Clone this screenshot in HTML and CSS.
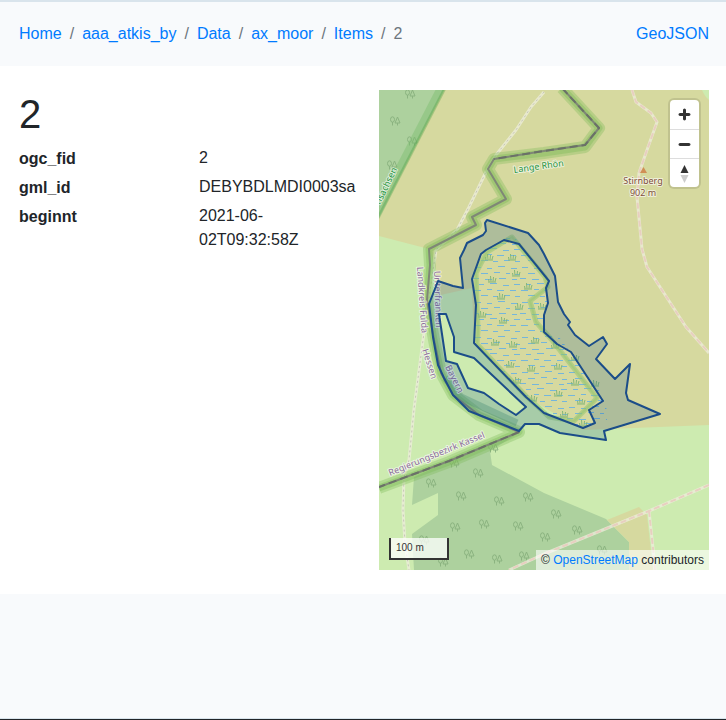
FILE: index.html
```html
<!DOCTYPE html>
<html lang="en">
<head>
<meta charset="utf-8">
<meta name="viewport" content="width=device-width, initial-scale=1">
<title>2</title>
<link rel="stylesheet" href="styles.css">
</head>
<body>
<header class="topbar">
  <div class="container topbar-inner">
    <nav aria-label="Breadcrumb">
      <ol class="breadcrumb">
        <li><a href="#">Home</a></li>
        <li><a href="#">aaa_atkis_by</a></li>
        <li><a href="#">Data</a></li>
        <li><a href="#">ax_moor</a></li>
        <li><a href="#">Items</a></li>
        <li class="current">2</li>
      </ol>
    </nav>
    <a href="#">GeoJSON</a>
  </div>
</header>

<main class="container content">
  <section>
    <h1>2</h1>
    <dl class="properties">
      <dt>ogc_fid</dt><dd>2</dd>
      <dt>gml_id</dt><dd>DEBYBDLMDI0003sa</dd>
      <dt>beginnt</dt><dd>2021-06-02T09:32:58Z</dd>
    </dl>
  </section>

  <section class="map" aria-label="Map">
    <svg class="map-canvas" viewBox="0 0 330 480" preserveAspectRatio="xMidYMid slice">
      <defs>
        <g id="trees" fill="none" stroke="#8bb380" stroke-width="1">
          <ellipse cx="-2.5" cy="-1.5" rx="2" ry="2.7"/>
          <path d="M-2.5 1V4.500M2.500 -4L0 2H5ZM2.500 2V4.500"/>
        </g>
        <path id="tuft" d="M-4 3H4M-3 2.500L-3.500 0M-1 2.500L-1.500 -3M1 2.500L1.500 -2M3 2.500L4 -1" fill="none" stroke="#84b778" stroke-width="1"/>
        <pattern id="marsh" width="47" height="35" patternUnits="userSpaceOnUse">
          <path transform="translate(0 .5)" d="M2 2h6M14 3h5M25 1h7M38 3h6M8 8h7M21 7h6M33 8h4M42 9h5M0 13h6M12 14h7M26 13h7M39 14h5M6 19h5M17 18h7M30 20h6M41 19h6M1 25h7M14 24h5M24 25h7M37 25h6M8 30h7M20 31h5M31 30h6M42 31h5" stroke="#74b6dc" stroke-width="1"/>
        </pattern>
        <clipPath id="bog"><path d="M133 144L165 184 170 191 167 198 169 213 165 225 165 242 180 247 227 310 228 330 204 338 165 323 147 307 95 253 97 215 93 189 102 164Z"/></clipPath>
      </defs>

      <!-- land cover -->
      <rect width="330" height="480" fill="#d6d99f"/>
      <path d="M0 146L50 159 57 180 57 206 93 198 95 253 147 307 204 340 330 335V480H0Z" fill="#cdebb0"/>
      <path d="M323 0Q326 7 330 10V0Z" fill="#cdebb0"/>
      <path d="M0 0H65L0 128Z" fill="#add19e"/>
      <path d="M35 387L110 353 140 343 111 361 113 375 165 403 227 429 250 452V480H35L33 444 59 425V403L33 415Z" fill="#add19e"/>
      <path d="M228 430L260 417 268 425 274 480H250V452Z" fill="#d6d99f"/>

      <!-- wetland -->
      <g clip-path="url(#bog)">
        <rect x="80" y="140" width="150" height="200" fill="url(#marsh)"/>
      </g>
      <g fill="none" stroke="#8fc36c" stroke-opacity=".5" stroke-linejoin="round">
        <path stroke-width="5" d="M133 147L108 162 97 183 99 240 98 254 147 306 170 327 195 331 218 308 172 249 157 232 151 211 169 197 166 187Z"/>
        <path stroke-width="2" stroke-opacity=".35" d="M133 147L108 162 97 183 99 240 98 254 147 306 170 327 195 331 218 308 172 249 157 232 151 211 169 197 166 187Z"/>
      </g>
      <g>
        <use href="#tuft" x="110" y="167"/><use href="#tuft" x="133" y="167"/><use href="#tuft" x="137" y="183"/><use href="#tuft" x="113" y="189"/><use href="#tuft" x="149" y="196"/><use href="#tuft" x="122" y="206"/><use href="#tuft" x="140" y="216"/><use href="#tuft" x="103" y="224"/><use href="#tuft" x="124" y="230"/><use href="#tuft" x="163" y="216"/><use href="#tuft" x="116" y="252"/><use href="#tuft" x="134" y="254"/><use href="#tuft" x="156" y="250"/><use href="#tuft" x="131" y="274"/><use href="#tuft" x="152" y="278"/><use href="#tuft" x="138" y="290"/><use href="#tuft" x="154" y="308"/><use href="#tuft" x="176" y="255"/><use href="#tuft" x="196" y="267"/><use href="#tuft" x="179" y="276"/><use href="#tuft" x="196" y="292"/><use href="#tuft" x="216" y="293"/><use href="#tuft" x="179" y="303"/><use href="#tuft" x="202" y="311"/><use href="#tuft" x="185" y="324"/><use href="#tuft" x="204" y="333"/>
      </g>
      <g>
        <use href="#trees" x="31" y="4"/><use href="#trees" x="16" y="31"/><use href="#trees" x="33" y="51"/><use href="#trees" x="13" y="75"/><use href="#trees" x="52" y="393"/><use href="#trees" x="99" y="383"/><use href="#trees" x="114" y="358"/><use href="#trees" x="75" y="373"/><use href="#trees" x="82" y="406"/><use href="#trees" x="120" y="411"/><use href="#trees" x="149" y="407"/><use href="#trees" x="76" y="437"/><use href="#trees" x="105" y="434"/><use href="#trees" x="139" y="436"/><use href="#trees" x="45" y="450"/><use href="#trees" x="90" y="464"/><use href="#trees" x="118" y="469"/><use href="#trees" x="145" y="466"/><use href="#trees" x="64" y="472"/><use href="#trees" x="166" y="447"/><use href="#trees" x="177" y="424"/><use href="#trees" x="198" y="440"/><use href="#trees" x="223" y="460"/>
      </g>

      <!-- tracks -->
      <g fill="none" stroke-linejoin="round">
        <g stroke="#eeeedc" stroke-opacity=".75" stroke-width="3">
          <path d="M165 2L152 17 137 40 117 65 107 82 90 117 78 140 57 160 46 235 35 319 30 370 25 387 24 420 26 453 30 480"/>
          <path d="M253 0L257 12 272 23 278 32 268 60 260 83 258 107 263 159 268 177 307 237 330 263M330 395L270 421 165 464 130 480M270 421L274 458 276 480"/>
        </g>
        <path stroke="#c6c6b8" stroke-width="1" stroke-dasharray="2 3" d="M165 2L152 17 137 40 117 65 107 82 90 117 78 140 57 160 46 235 35 319 30 370 25 387 24 420 26 453 30 480"/>
        <path stroke="#e8cfc0" stroke-width="2" stroke-dasharray="6 3" d="M253 0L257 12 272 23 278 32 268 60 260 83 258 107 263 159 268 177 307 237 330 263M330 395L270 421 165 464 130 480M270 421L274 458 276 480"/>
      </g>

      <!-- boundaries -->
      <g fill="none" stroke-linejoin="round">
        <path d="M62 -2L-5 128" stroke="#76bb68" stroke-opacity=".4" stroke-width="8"/>
        <path d="M66 -2L-1 128" stroke="#4d9f43" stroke-opacity=".35" stroke-width="3"/>
        <g stroke="#7dbb58">
          <path stroke-opacity=".35" stroke-width="12" d="M183 -2L220 38 206 57 165 63 115 69 109 79 127 109 93 127 97 135 50 159 51 175 48 210 55 250 62 283 74 305 100 325 140 342 70 372 0 398"/>
          <path stroke-opacity=".4" stroke-width="7" d="M183 -2L220 38 206 57 165 63 115 69 109 79 127 109 93 127 97 135 50 159 51 175 48 210 55 250 62 283 74 305 100 325 140 342 70 372 0 398"/>
        </g>
        <path stroke="#3b8b60" stroke-opacity=".3" stroke-width="7" d="M66 288L82 307 138 333"/>
        <path stroke="#7f8776" stroke-width="2" d="M183 -2L220 38 206 55 165 61 115 69 109 79 127 109 93 127 97 135 50 159 51 175 48 210 55 250 62 283 74 305 100 325 140 342 70 371 0 397"/>
        <path stroke="#6a7167" stroke-width="2" stroke-dasharray="8 4" d="M183 -2L220 38 206 55 165 61 115 69M140 342L70 371 0 397"/>
      </g>

      <!-- place names -->
      <g class="label-halo">
        <g class="label-park">
          <text transform="translate(1 115) rotate(-64)">nsachsen</text>
          <text transform="translate(135 83) rotate(-8)">Lange Rhön</text>
        </g>
        <g class="label-admin">
          <text transform="translate(38 177) rotate(86)">Landkreis Fulda</text>
          <text transform="translate(55 181) rotate(88)">Unterfranken</text>
          <text transform="translate(43 260) rotate(72)">Hessen</text>
          <text transform="translate(66 277) rotate(63)">Bayern</text>
          <text transform="translate(11 386) rotate(-22)">Regierungsbezirk Kassel</text>
        </g>
        <g class="label-peak">
          <text x="264" y="94">Stirnberg</text>
          <text x="264" y="106">902 m</text>
        </g>
      </g>
      <path d="M264.500 77L268 83H261Z" fill="#d08f55"/>

      <!-- item geometry -->
      <path class="feature" d="M108 130L106 133 107 141 104 145 88 153 85 160 81 168 84 198 74 196 59 191 50 214 54 247 59 275 65 288 74 305 90 321 140 341 146 334 160 334 181 343 227 350 225 341 281 324 249 310 247 303 251 274 236 289 217 269 228 254 224 247 210 256 196 245 189 235 191 232 185 224 179 212 176 186 165 164 160 155 149 143ZM107 160L125 150 140 154 170 191 167 198 169 213 165 225 165 242 178 254 192 262 224 311 210 320 216 333 204 338 165 323 147 307 95 253 97 215 93 189 102 164ZM60 224H67L75 247V262L95 268 147 317 137 325 120 314 105 303 89 298 78 274 67 271Z"/>
    </svg>

    <div class="map-controls">
      <button type="button" aria-label="Zoom in"><svg viewBox="0 0 29 29"><path d="M14.500 8.500c-.75 0-1.500.75-1.500 1.500v3h-3c-.75 0-1.500.75-1.500 1.500S9.250 16 10 16h3v3c0 .75.75 1.500 1.500 1.500S16 19.750 16 19v-3h3c.75 0 1.500-.75 1.500-1.500S19.750 13 19 13h-3v-3c0-.75-.75-1.500-1.500-1.500z"/></svg></button>
      <button type="button" aria-label="Zoom out"><svg viewBox="0 0 29 29"><path d="M10 13c-.75 0-1.500.75-1.500 1.500S9.250 16 10 16h9c.75 0 1.500-.75 1.500-1.500S19.750 13 19 13h-9z"/></svg></button>
      <button type="button" aria-label="Reset bearing to north"><svg viewBox="0 0 29 29"><path d="M10.500 14l4-8 4 8z"/><path class="south" d="M10.500 16l4 8 4-8z"/></svg></button>
    </div>
    <div class="map-scale">100 m</div>
    <div class="map-attribution">© <a href="#">OpenStreetMap</a> contributors</div>
  </section>
</main>

<footer class="footer"></footer>
</body>
</html>
```
FILE: styles.css
```css
* {
  box-sizing: border-box;
}

body {
  margin: 0;
  min-height: 100vh;
  display: flex;
  flex-direction: column;
  background: #f8fafc;
  border-top: 2px solid #d9e4ec;
  border-bottom: 1px solid #212529;
  color: #212529;
  font-family: "Liberation Sans", Arial, sans-serif;
  font-size: 16px;
  line-height: 24px;
}

a {
  color: #007bff;
  text-decoration: none;
}

.container {
  width: 100%;
  padding-left: 19px;
  padding-right: 17px;
}

.topbar-inner {
  display: flex;
  justify-content: space-between;
  padding-top: 20px;
  padding-bottom: 20px;
}

.breadcrumb {
  display: flex;
  margin: 0;
  padding: 0;
  list-style: none;
}

.breadcrumb li + li::before {
  content: "/";
  padding: 0 8px;
  color: #6c757d;
}

.breadcrumb .current {
  color: #6c757d;
}

.content {
  display: grid;
  grid-template-columns: repeat(2, minmax(0, 1fr));
  gap: 30px;
  padding-top: 24px;
  padding-bottom: 24px;
  background: #fff;
}

h1 {
  margin: 0 0 8px;
  font-size: 40px;
  font-weight: 400;
  line-height: 48px;
}

.properties {
  display: grid;
  grid-template-columns: repeat(2, minmax(0, 1fr));
  gap: 5px 30px;
  margin: 0;
}

.properties dt {
  font-weight: 700;
  padding-top: 1px;
  line-height: 23px;
}

.properties dd {
  margin: 0;
}

.map {
  position: relative;
  height: 480px;
  overflow: hidden;
}

.map-canvas {
  display: block;
  width: 100%;
  height: 100%;
}

.label-halo {
  font-family: "Noto Sans", sans-serif;
  font-size: 9px;
  paint-order: stroke;
  stroke: rgba(255, 255, 255, 0.6);
  stroke-width: 2px;
  stroke-linejoin: round;
}

.label-park {
  fill: #26943f;
}

.label-admin {
  fill: #8d6d9c;
}

.label-peak {
  fill: #804f3c;
  text-anchor: middle;
}

.feature {
  fill: rgba(16, 78, 139, 0.2);
  fill-rule: evenodd;
  stroke: #1b4d89;
  stroke-width: 2px;
  stroke-linejoin: round;
}

.map-controls {
  position: absolute;
  top: 10px;
  right: 10px;
  display: flex;
  flex-direction: column;
  overflow: hidden;
  border-radius: 4px;
  background: #fff;
  box-shadow: 0 0 0 2px rgba(0, 0, 0, 0.1);
}

.map-controls button {
  width: 29px;
  height: 29px;
  padding: 0;
  border: 0;
  background: transparent;
  cursor: pointer;
}

.map-controls button + button {
  border-top: 1px solid #ddd;
}

.map-controls svg {
  display: block;
  width: 29px;
  height: 29px;
  fill: #333;
}

.map-controls .south {
  fill: #ccc;
}

.map-scale {
  position: absolute;
  left: 10px;
  bottom: 10px;
  width: 60px;
  padding: 0 5px;
  border: 2px solid #333;
  border-top: 0;
  background: rgba(255, 255, 255, 0.75);
  color: #333;
  font-size: 10px;
  line-height: 20px;
}

.map-attribution {
  position: absolute;
  right: 0;
  bottom: 0;
  padding: 0 5px;
  background: rgba(255, 255, 255, 0.6);
  font-size: 12px;
  line-height: 20px;
}

.footer {
  flex: 1;
  border-bottom: 1px solid #d9e4ec;
}
```
